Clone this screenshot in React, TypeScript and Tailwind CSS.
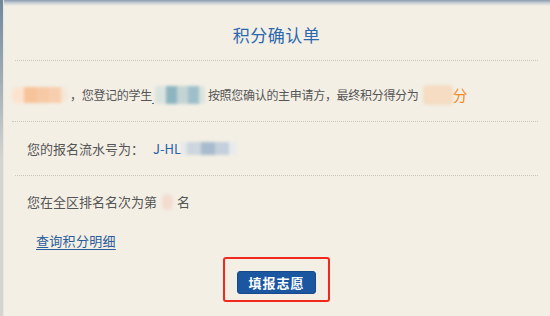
import React from "react";

const font = { fontFamily: '"Microsoft YaHei", "Noto Sans CJK SC", sans-serif' };

const Blob: React.FC<{ className: string }> = ({ className }) => (
  <span className={`inline-block align-middle blur-[1.5px] rounded-[4px] ${className}`} />
);

const App: React.FC = () => {
  return (
    <div
      className="relative w-[550px] h-[316px] overflow-hidden bg-[#f3efe5] text-[#555]"
      style={font}
    >
      {/* top shade and left edge */}
      <div className="absolute left-0 top-0 w-full h-[6px] bg-gradient-to-b from-[#8a9cae] via-[#c9d0d6] to-[#f3efe5]" />
      <div className="absolute left-0 top-0 h-full w-[3px] bg-gradient-to-b from-[#6f879c] via-[#d4d4d0] to-[#d4d4d0]" />
      <div className="absolute left-[3px] top-0 h-full w-px bg-[#e9e6de]" />

      <div className="ml-[15px] mr-[12px] flex flex-col">
        <div className="h-[61px] pt-[10px] flex items-center justify-center border-b border-dotted border-[#c8c6c0]">
          <span className="text-[17px] text-[#2b68ad] tracking-[0.5px]">积分确认单</span>
        </div>

        <div className="h-[61px] pt-[7px] -ml-[3px] flex items-center text-[12px] tracking-[-0.3px] border-b border-dotted border-[#c8c6c0]">
          <span className="inline-flex w-[55px] h-[16px] mr-[3px] overflow-hidden blur-[1.5px] rounded-[5px]">
            <span className="flex-1 bg-[#fbe3cf]" />
            <span className="flex-1 bg-[#f7c39a]" />
            <span className="flex-1 bg-[#f6caa6]" />
            <span className="flex-1 bg-[#f8cfae]" />
            <span className="w-[6px] bg-[#f5e6d8]" />
          </span>
          <span>，您登记的学生</span>
          <span className="inline-flex items-end h-[18px]">
            <span className="w-[2px] h-[1px] bg-[#4a6f86] mr-[1px]" />
            <span className="inline-flex w-[50px] h-[18px] overflow-hidden blur-[1.5px] rounded-[4px]">
              <span className="flex-1 bg-[#dbe3df]" />
              <span className="flex-1 bg-[#8db5c1]" />
              <span className="flex-1 bg-[#c3d4d4]" />
              <span className="flex-1 bg-[#9ebfc9]" />
              <span className="w-[6px] bg-[#dbe2de]" />
            </span>
          </span>
          <span className="ml-[3px]">按照您确认的主申请方，最终积分得分为</span>
          <Blob className="ml-[4px] w-[30px] h-[20px] bg-[#f5dcc3]" />
          <span className="text-[15px] text-[#f28a24] leading-none">分</span>
        </div>

        <div className="h-[54px] pl-[12px] flex items-center text-[13px] border-b border-dotted border-[#c8c6c0]">
          <span>您的报名流水号为：</span>
          <span className="ml-[9px] text-[#2760a8]">J-HL</span>
          <span className="inline-flex w-[56px] h-[13px] overflow-hidden blur-[1.5px]">
            <span className="w-[6px] bg-[#e6e8ea]" />
            <span className="flex-1 bg-[#cdd6de]" />
            <span className="flex-1 bg-[#a9bccd]" />
            <span className="flex-1 bg-[#c4d0db]" />
            <span className="w-[8px] bg-[#e8ebec]" />
          </span>
        </div>

        <div className="pl-[12px] pt-[16px] flex flex-col">
          <div className="h-[20px] flex items-center text-[13px]">
            <span>您在全区排名名次为第</span>
            <span className="inline-block w-[11px] h-[16px] ml-[5px] mr-[4px] rounded-full bg-[#f3dccf] blur-[1.5px]" />
            <span>名</span>
          </div>
          <div className="mt-[19px] pl-[9px] h-[20px] flex items-center">
            <a className="text-[13px] text-[#2a5d9a] underline underline-offset-[3px] tracking-[0.3px] cursor-pointer">
              查询积分明细
            </a>
          </div>
          <div className="mt-[6px] pl-[196px] flex">
            <div className="w-[107px] h-[45px] border-2 border-[#f0281e] rounded-[3px] flex items-start justify-center pt-[12px]">
              <button className="w-[79px] h-[23px] rounded-[3px] bg-[#1b57a1] border border-[#164a8a] text-white text-[13px] font-bold leading-none tracking-[1px]">
                填报志愿
              </button>
            </div>
          </div>
        </div>
      </div>
    </div>
  );
};

export default App;
